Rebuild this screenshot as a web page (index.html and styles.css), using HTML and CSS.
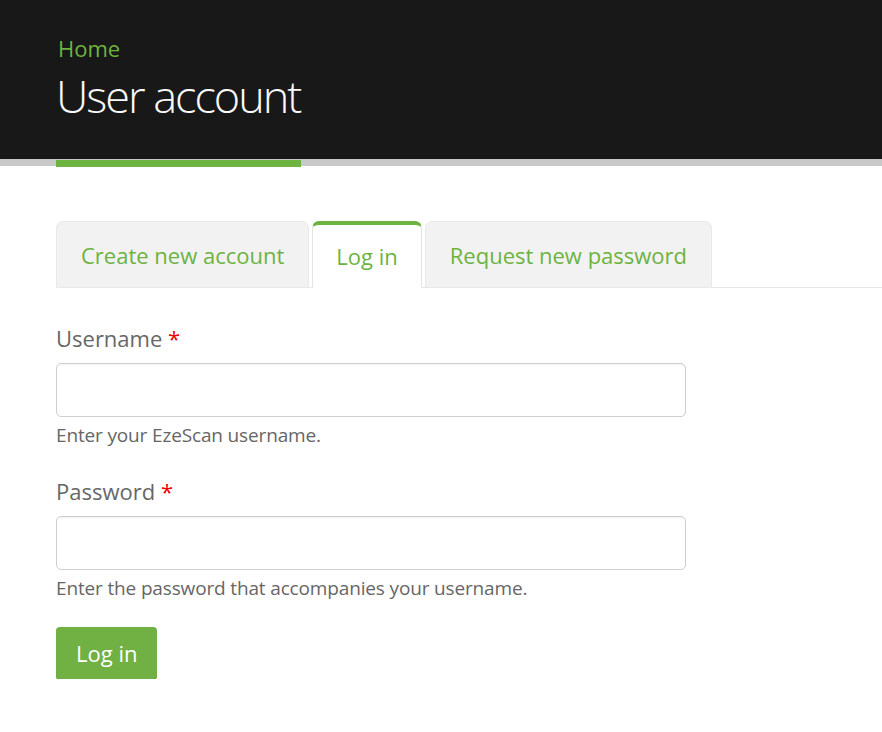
FILE: index.html
```html
<!DOCTYPE html>
<html lang="en">
<head>
<meta charset="utf-8">
<title>User account</title>
<link rel="stylesheet" href="styles.css">
</head>
<body>
<header class="header">
  <nav class="crumb"><a href="#">Home</a></nav>
  <h1 class="title">User account</h1>
</header>
<div class="bar"><div class="bar-accent"></div></div>

<main class="content">
  <ul class="tabs">
    <li class="tab"><a href="#">Create new account</a></li>
    <li class="tab active"><a href="#">Log in</a></li>
    <li class="tab"><a href="#">Request new password</a></li>
  </ul>

  <form class="form">
    <div class="field">
      <label class="label" for="name">Username <span class="req">*</span></label>
      <input class="input" id="name" type="text">
      <div class="help">Enter your EzeScan username.</div>
    </div>
    <div class="field">
      <label class="label" for="pass">Password <span class="req">*</span></label>
      <input class="input" id="pass" type="password">
      <div class="help">Enter the password that accompanies your username.</div>
    </div>
    <button class="btn" type="button">Log in</button>
  </form>
</main>
</body>
</html>
```

FILE: styles.css
```css
* { box-sizing: border-box; }
html, body { margin: 0; padding: 0; }
body {
  font-family: "Open Sans", "DejaVu Sans", sans-serif;
  background: #fff;
  color: #666;
}
a { text-decoration: none; color: inherit; }

.header {
  background: #181818;
  height: 159px;
  padding: 34px 56px 0;
}
.crumb {
  font-size: 22px;
  line-height: 28px;
  margin-left: 2px;
  color: #6db33f;
}
.crumb a { color: #6db33f; }
.title {
  margin: 6px 0 0;
  font-family: "Open Sans", sans-serif;
  font-size: 45px;
  line-height: 55px;
  font-weight: 300;
  color: #fafafa;
  letter-spacing: -2px;
}

.bar {
  height: 8px;
  background: linear-gradient(#c8c8c8 0 7px, #fff 7px);
  padding-top: 1px;
}
.bar-accent {
  width: 245px;
  height: 7px;
  margin-left: 56px;
  background: #6db33f;
}

.content { padding: 0 0 0 56px; }

.tabs {
  list-style: none;
  margin: 54px 0 0;
  padding: 0;
  display: flex;
  gap: 3px;
  border-bottom: 1px solid #e6e6e6;
}
.tab {
  height: 67px;
  margin-bottom: -1px;
  display: flex;
  align-items: center;
  padding: 0 24px;
  background: #f2f2f2;
  border: 1px solid #e9e9e9;
  border-radius: 7px 7px 0 0;
  font-size: 22px;
  color: #6db33f;
}
.tab a { color: #6db33f; }
.tab.active {
  padding: 0 23px;
  background: #fff;
  border-color: #e3e3e3;
  border-top: 4px solid #6db33f;
  border-bottom-color: #fff;
}

.form { padding-top: 35px; width: 630px; }
.field { margin-bottom: 28px; }
.label {
  display: block;
  font-size: 22px;
  line-height: 30px;
  color: #676767;
  margin-bottom: 10px;
}
.req { color: #e00; }
.input {
  display: block;
  width: 630px;
  height: 54px;
  border: 1px solid #cfcfcf;
  border-radius: 5px;
  box-shadow: inset 0 1px 2px rgba(0,0,0,0.06);
  background: #fff;
  font: inherit;
  font-size: 18px;
  padding: 0 12px;
}
.help {
  margin-top: 5px;
  font-size: 19px;
  line-height: 26px;
  color: #666;
  letter-spacing: -0.15px;
}
.btn {
  display: block;
  margin-top: -2px;
  height: 52px;
  padding: 0 20px;
  border: none;
  border-radius: 4px;
  background: #71b043;
  color: #fff;
  font-family: "Open Sans", sans-serif;
  font-size: 22px;
  box-shadow: 0 1px 0 #5d9636;
}
```
